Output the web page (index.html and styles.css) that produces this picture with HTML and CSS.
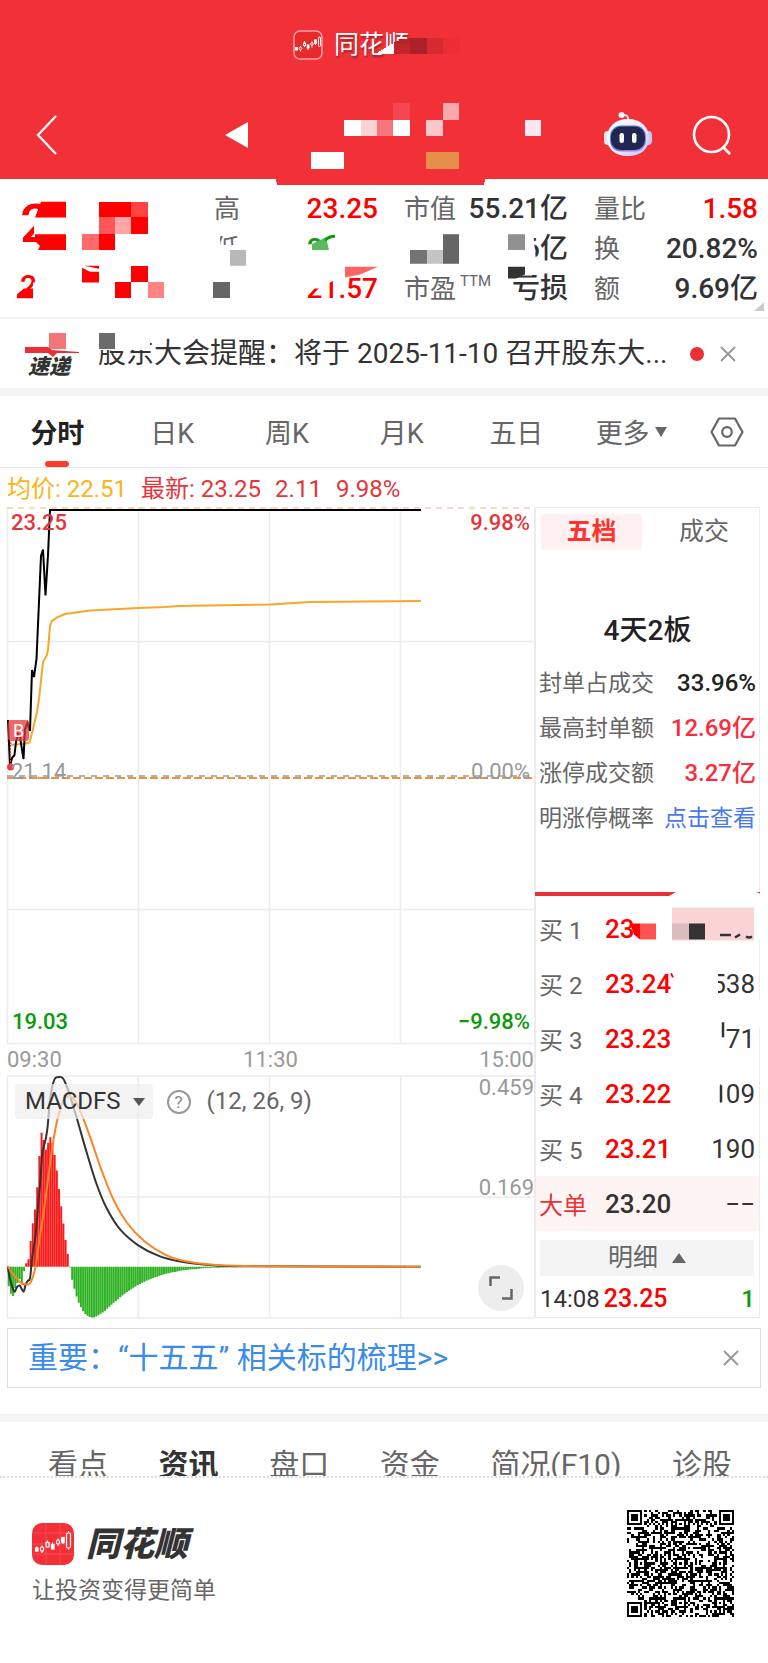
FILE: index.html
```html
<!DOCTYPE html>
<html lang="zh-CN">
<head>
<meta charset="utf-8">
<meta name="viewport" content="width=device-width, initial-scale=1">
<title>同花顺</title>
<link rel="stylesheet" href="styles.css">
</head>
<body>
<header class="top">
  <div class="brand">
    <svg class="brand-icon" viewBox="0 0 30 30" aria-hidden="true"><rect x="1" y="1" width="28" height="28" rx="6" fill="#e92a2c" stroke="#f9a0a2" stroke-width="1.5"/><g fill="#fff" stroke="#fff"><rect x="2.500" y="17.500" width="2" height="2.500"/><circle cx="7.500" cy="18.500" r="1.300" fill="none"/><path d="M7.500 16v1M7.500 20v1.500M11.500 11v6M15 14v6M19 11.500v6M22.500 9v6"/><rect x="10.500" y="13" width="2" height="2.500" fill="#e92a2c"/><rect x="14.200" y="15" width="1.800" height="3"/><circle cx="19" cy="14" r="1.200" fill="#e92a2c"/><rect x="21.700" y="10" width="1.600" height="3.500"/><rect x="25.500" y="7" width="2" height="9.500" rx="1" fill="none"/></g></svg>
    <span>同花顺</span>
  </div>
  <nav class="bar">
    <button class="icon-btn" aria-label="返回"><svg width="22" height="42" viewBox="0 0 22 42"><path d="M20 2 2 21 20 40" fill="none" stroke="#fff" stroke-width="2.200"/></svg></button>
    <button class="icon-btn prev" aria-label="上一只"><svg width="23" height="26" viewBox="0 0 23 26"><path d="M23 0V26L0 13Z" fill="#fff"/></svg></button>
    <span class="spacer"></span>
    <button class="icon-btn bot" aria-label="智能助手"><svg width="48" height="46" viewBox="0 0 48 46">
      <defs><linearGradient id="shell" x1="0" y1="0" x2="1" y2="1"><stop offset="0" stop-color="#fff"/><stop offset=".6" stop-color="#e7e9fb"/><stop offset="1" stop-color="#b9bff0"/></linearGradient><linearGradient id="rim" x1="0" y1="0" x2="1" y2="1"><stop offset="0" stop-color="#4a8fc0"/><stop offset=".5" stop-color="#7a6be0"/><stop offset="1" stop-color="#b58cf5"/></linearGradient></defs>
      <path d="M24 9c1-4-1-6-4-6" fill="none" stroke="#e9eafa" stroke-width="2"/><circle cx="17.500" cy="3" r="3" fill="#f4f2fc"/>
      <rect x="0" y="19" width="8" height="14" rx="4" fill="#e3e4f8"/><rect x="40" y="19" width="8" height="14" rx="4" fill="#c3c8f5"/>
      <path d="M24 7C37 7 45 15 45 26S37 44 24 44 3 37 3 26 11 7 24 7Z" fill="url(#shell)"/>
      <rect x="6" y="13.500" width="36" height="26" rx="11" fill="url(#rim)"/><rect x="7" y="14.500" width="34" height="23.500" rx="10" fill="#1f2750"/>
      <rect x="15.500" y="21" width="4.500" height="10" rx="2.200" fill="#fff"/><rect x="28" y="21" width="4.500" height="10" rx="2.200" fill="#fff"/></svg></button>
    <button class="icon-btn" aria-label="搜索"><svg width="40" height="40" viewBox="0 0 40 40"><g fill="none" stroke="#fff" stroke-width="2.600"><circle cx="19.500" cy="19.500" r="17.500"/><path d="M31 32 38 39"/></g></svg></button>
  </nav>
  <svg class="overlay" viewBox="0 0 768 185" preserveAspectRatio="none" aria-hidden="true" shape-rendering="crispEdges">
    <path d="M276 179H485L484 185H277Z" fill="#f23038"/>
    <path d="M377 53 393.500 43V54H377Z" fill="#fff"/><path d="M393.500 42 410 38V54H393.500Z" fill="#b92329"/><path d="M393.500 44h17v10h-17z" fill="#c0262c"/><path d="M410 38h17v16h-17z" fill="#ac2228"/><path d="M427 38h16v16h-16z" fill="#d52a31"/><path d="M443 38h17v16h-17z" fill="#eb2e36"/><path d="M385 54H410V60H385Z" fill="#f23038"/>
    <path d="M393 103h17v17h-17z" fill="#f54550"/><path d="M443 103h16v17h-16z" fill="#faa8ac"/>
    <path d="M344 120h17v16h-17zM393 120h17v16h-17zM311 152h33v17h-33z" fill="#fff"/><path d="M361 120h16v16h-16z" fill="#fcd3d5"/><path d="M377 120h16v16h-16z" fill="#f6767b"/><path d="M426 120h17v16h-17z" fill="#fbc7c9"/><path d="M525 120h16v16h-16z" fill="#f5e9ed"/><path d="M426 152h33v17h-33z" fill="#e58f4b"/>
  </svg>
</header>

<section class="quote">
  <div class="price"><strong>2</strong><span>2</span></div>
  <dl class="stats">
    <div><dt>高</dt><dd class="red">23.25</dd></div>
    <div><dt>低</dt><dd class="green low">21</dd></div>
    <div><dt></dt><dd class="red">21.57</dd></div>
  </dl>
  <dl class="stats">
    <div><dt>市值</dt><dd>55.21亿</dd></div>
    <div><dt></dt><dd>6亿</dd></div>
    <div><dt>市盈<sup>TTM</sup></dt><dd>亏损</dd></div>
  </dl>
  <dl class="stats">
    <div><dt>量比</dt><dd class="red">1.58</dd></div>
    <div><dt>换</dt><dd>20.82%</dd></div>
    <div><dt>额</dt><dd>9.69亿</dd></div>
  </dl>
  <svg class="overlay" viewBox="0 179 768 140" preserveAspectRatio="none" aria-hidden="true">
    <path d="M5 316H246V319H5Z" fill="#fff"/>
    <path d="M36 216H66V236H34V226H22V216Z" fill="#fff"/>
    <path d="M41 202H66V218H35ZM35 235H66V251H38L40 247 35 242Z" fill="red"/>
    <g shape-rendering="crispEdges"><path d="M99 202h32v16h-32zM131 218h17v17h-17zM99 235h16v16h-16zM131 267h17v17h-17zM115 284h16v16h-16z" fill="red"/><path d="M131 202h17v16h-17z" fill="#ff4343"/><path d="M99 218h16v17h-16z" fill="#ff5757"/><path d="M115 218h16v17h-16z" fill="#ffa5a5"/><path d="M82 235h17v16h-17z" fill="#ff6a6a"/><path d="M148 284h16v16h-16z" fill="#ff8383"/>
    <path d="M213 284h17v16h-17z" fill="#666"/></g>
    <path d="M33 284H42V302H33Z" fill="#fff"/>
    <path d="M82 269 90 273H99V284H82ZM33 290V300H17V296L24 290Z" fill="red"/><path d="M84 267H99V270Z" fill="red"/>
    <path d="M208 230H220V262H208ZM222 246H245V262H222ZM208 246H245V264H208Z" fill="#fff"/><path d="M230 251h16v16h-16z" fill="#b8b8b8"/>
    <path d="M302 247H340V266H302ZM320 236H340V266H320Z" fill="#fff"/><path d="M312 245 326 238 329 251H312Z" fill="#5cb95c"/><path d="M325 241Q329 237 335 237" fill="none" stroke="#0a9a0a" stroke-width="3"/>
    <path d="M302 272H334V282L318 290H302Z" fill="#fff"/><path d="M345 268H378L360 276 345 279Z" fill="#ff6464"/>
    <path d="M410 251h17v14h-17z" fill="#747474"/><path d="M427 251h16v14h-16z" fill="#c4c4c4"/><path d="M443 235h16v30h-16z" fill="#666"/>
    <path d="M519 232H530V266H519ZM530 232H533L536 262H530Z" fill="#fff"/><path d="M508 235h17v16h-17z" fill="#909090"/>
    <path d="M504 266H532V277H504Z" fill="#fff"/><path d="M508 268H525V276L516 280H508Z" fill="#333"/>
    <path d="M764 304V313H754Z" fill="#ccc"/>
  </svg>
</section>

<section class="news">
  <div class="news-logo"><b>速递</b></div>
  <a class="news-text" href="#">股东大会提醒：将于 2025-11-10 召开股东大...</a>
  <i class="dot"></i>
  <button class="icon-btn" aria-label="关闭"><svg width="16" height="16" viewBox="0 0 16 16"><path d="M1 1 15 15M15 1 1 15" stroke="#999" stroke-width="2"/></svg></button>
  <svg class="overlay" viewBox="0 319 768 69" preserveAspectRatio="none" aria-hidden="true">
    <path d="M96 330H150V350H96Z" fill="#fff"/><path d="M99 333h16v16h-16z" fill="#6b6b6b"/><path d="M49 333h17v16h-17z" fill="#f27579"/>
    <path d="M25 347H48L52 350 79 352V353H57L53 357 48 353H25Z" fill="#e83035"/>
  </svg>
</section>

<nav class="periods">
  <button class="on">分时</button><button>日K</button><button>周K</button><button>月K</button><button>五日</button>
  <button class="more">更多<svg width="12" height="10" viewBox="0 0 12 10"><path d="M0 0H12L6 10Z" fill="#666"/></svg></button>
  <button class="gear" aria-label="设置"><svg width="34" height="30" viewBox="0 0 34 30"><g fill="none" stroke="#666" stroke-width="2.200" stroke-linejoin="round"><path d="M9 1.500H25L32.500 15 25 28.500H9L1.500 15Z"/><circle cx="17" cy="15" r="4.800"/></g></svg></button>
</nav>

<p class="legend"><span class="avg">均价: 22.51</span><span>最新: 23.25</span><span>2.11</span><span>9.98%</span></p>

<main class="board">
  <div class="charts">
    <div class="chart price-chart">
      <svg class="plot" viewBox="7 507 527 537" preserveAspectRatio="none" aria-hidden="true">
        <path d="M7.500 507V1043.500H534M7 641.500H534M7 909.500H534M138.500 507V1043M269.500 507V1043M400.500 507V1043" fill="none" stroke="#ececec" stroke-width="1.500"/>
        <path d="M7 508H534" stroke="#ecd2ac" stroke-width="1.500" stroke-dasharray="6 5"/>
        <path d="M7 776H534" stroke="#999" stroke-width="1.500" stroke-dasharray="6 6"/>
        <path d="M7 778H534" stroke="#ef9141" stroke-width="2" stroke-dasharray="8 3"/>
        <path d="M8 740 12 745 20 744 29 743 30 741 33 729 37 712 39 699 43 662 47 655 48 650 50 626 52 621 58 617 65 614 90 610.500 138 608 165 607 178 606 270 604.500 310 602 421 601" fill="none" stroke="#f9a62b" stroke-width="2"/>
        <path d="M8 720 10 766 12 758 14.500 755 16 742 18 734 20 737 23.500 759 25 729 27.500 723 30 731 32 670 34 677 36.500 659 41 556 43 549.500 45.500 595.500 48 555 50 510H421" fill="none" stroke="#000" stroke-width="2"/>
        <path d="M10.500 742V766" stroke="#e74048" stroke-dasharray="2 1"/><circle cx="10.500" cy="767" r="3.500" fill="#e74048"/>
      </svg>
      <span class="tag tl red2">23.25</span><span class="tag tr red2">9.98%</span>
      <span class="tag ml">21.14</span><span class="tag mr">0.00%</span>
      <span class="tag bl green">19.03</span><span class="tag br green">−9.98%</span>
      <span class="buy">B</span>
    </div>
    <div class="times"><span>09:30</span><span>11:30</span><span>15:00</span></div>
    <div class="chart macd">
      <div class="macd-bar">
        <button class="macd-btn">MACDFS<svg width="12" height="8" viewBox="0 0 12 8"><path d="M0 0H12L6 8Z" fill="#555"/></svg></button>
        <button class="help" aria-label="说明">?</button>
        <span>(12, 26, 9)</span>
      </div>
      <svg class="plot" id="macd" viewBox="21 229 1530 726" preserveAspectRatio="none" aria-hidden="true">
        <path class="thin" d="M22 229H1551M22 592H1551M22 955H1551M22 229V955M402 229V955M783 229V955M1164 229V955" fill="none" stroke="#ececec" stroke-width="1.500"/>
      </svg>
      <span class="tag mt">0.459</span><span class="tag mm">0.169</span>
      <button class="expand" aria-label="放大"><svg width="24" height="24" viewBox="0 0 24 24"><path d="M1.500 10V1.500H11M22.500 13V22.500H13" fill="none" stroke="#666" stroke-width="2.500"/></svg></button>
    </div>
  </div>

  <aside class="side">
    <div class="side-tabs"><button class="on">五档</button><button>成交</button></div>
    <h2>4天2板</h2>
    <dl class="facts">
      <div><dt>封单占成交</dt><dd>33.96%</dd></div>
      <div><dt>最高封单额</dt><dd class="rose">12.69亿</dd></div>
      <div><dt>涨停成交额</dt><dd class="rose">3.27亿</dd></div>
      <div><dt>明涨停概率</dt><dd><a href="#">点击查看</a></dd></div>
    </dl>
    <table class="book">
      <tbody>
      <tr><th>买 1</th><td class="red">23</td><td></td></tr>
      <tr><th>买 2</th><td class="red">23.24</td><td>538</td></tr>
      <tr><th>买 3</th><td class="red">23.23</td><td>171</td></tr>
      <tr><th>买 4</th><td class="red">23.22</td><td>109</td></tr>
      <tr><th>买 5</th><td class="red">23.21</td><td>190</td></tr>
      <tr class="big"><th>大单</th><td>23.20</td><td>−−</td></tr>
      </tbody>
    </table>
    <button class="detail">明细<svg width="14" height="10" viewBox="0 0 14 10"><path d="M7 0 14 10H0Z" fill="#666"/></svg></button>
    <div class="tick"><span>14:08</span><span class="red">23.25</span><span class="green">1</span></div>
    <svg class="overlay" viewBox="536 508 223 810" preserveAspectRatio="none" aria-hidden="true">
      <path d="M757 895H761V940H757ZM757 1000H761V1028H757Z" fill="#fff"/>
      <path d="M535 892.500H676L669 896.500H535ZM756 892.500H760V894Z" fill="#e83035"/>
      <path d="M672 908H754V941H672Z" fill="#fad3d5"/><path d="M672 924h17v16h-17z" fill="#dcbcbe"/><path d="M689 924h16v16h-16z" fill="#333"/>
      <path d="M720 935.500H731M735 938 740 935M746 937Q749 939 752 937" fill="none" stroke="#333" stroke-width="2.500"/>
      <path d="M640 924h16v16h-16z" fill="#ff5353"/><path d="M630 924H640V940L634 935Z" fill="red"/>
      <path d="M710 970H718V1000H710ZM710 1026H726V1055H710ZM710 1080H720V1110H710Z" fill="#fff"/>
      <path d="M723 1023V1038M721 1086V1103" stroke="#333" stroke-width="2.500"/><path d="M671 974 673 978" stroke="red" stroke-width="2"/>
    </svg>
  </aside>
</main>

<div class="notice"><a href="#">重要：“十五五” 相关标的梳理&gt;&gt;</a><button class="icon-btn" aria-label="关闭"><svg width="16" height="16" viewBox="0 0 16 16"><path d="M1 1 15 15M15 1 1 15" stroke="#999" stroke-width="2"/></svg></button></div>

<nav class="sections"><button>看点</button><button class="on">资讯</button><button>盘口</button><button>资金</button><button>简况(F10)</button><button>诊股</button></nav>

<footer class="foot">
  <div>
    <div class="foot-brand">
      <svg width="42" height="42" viewBox="0 0 42 42" aria-hidden="true"><rect width="42" height="42" rx="10" fill="#f33038"/><path d="M0 10H42M0 21H42M0 31H42M14 0V42M28 0V42" stroke="#fff" stroke-opacity=".12"/><g fill="#fff" stroke="#fff" stroke-width="1.200"><rect x="3.500" y="25" width="2.500" height="3"/><rect x="8.500" y="24" width="3" height="4" rx="1" fill="none"/><path d="M4.700 23.500V25M10 22.500V24M10 28v2M15.500 17.500V19M20.500 19.500V21M26 15.500V17M26 21v2M31 19v2M36.500 8v2M36.500 25v1.500"/><rect x="14" y="19.500" width="3" height="4.500" fill="none"/><rect x="19.500" y="21.500" width="2.500" height="4.500"/><rect x="24.500" y="17" width="3" height="4" rx="1.500" fill="none"/><rect x="29.700" y="14.500" width="2.500" height="5"/><rect x="34.500" y="10" width="4" height="15" rx="1.500" fill="none"/></g></svg>
      <b>同花顺</b>
    </div>
    <p>让投资变得更简单</p>
  </div>
  <svg id="qr" class="qr" viewBox="0 0 49 49" shape-rendering="crispEdges" role="img" aria-label="二维码"></svg>
</footer>
<script src="charts.js"></script>
</body>
</html>
```
FILE: styles.css
```css
* { box-sizing: border-box; }
body { margin: 0; background: #fff; color: #333; font-family: Roboto, "Noto Sans CJK SC", sans-serif; }
button { border: 0; padding: 0; background: none; font: inherit; color: inherit; }
a { color: inherit; text-decoration: none; }
dl, dd, p, h2 { margin: 0; }
svg { display: block; flex: none; }
.red { color: #fe0000; }
.red2 { color: #e5353b; }
.green { color: #0a9a0a; }
.overlay { position: absolute; inset: 0; width: 100%; height: 100%; pointer-events: none; overflow: visible; }

.top { position: relative; height: 179px; background: #f23038; color: #fff; }
.top .overlay { height: 185px; z-index: 1; }
.brand { display: flex; justify-content: center; align-items: center; gap: 11px; padding: 28px 66px 0 0; font-size: 25px; line-height: 34px; text-shadow: 1px 2px 2px rgba(0, 0, 0, .35); }
.brand-icon { width: 30px; height: 30px; }
.bar { display: flex; align-items: center; padding: 50px 36px 0; }
.icon-btn { display: block; }
.prev { margin-left: 167px; }
.spacer { flex: 1; }
.bot { margin-right: 40px; }

.quote { position: relative; display: grid; grid-template-columns: 164px 164px 164px 164px; justify-content: end; column-gap: 26px; padding: 10px 10px 8px 0; border-bottom: 2px solid #f1f1f1; }
.price { display: flex; flex-direction: column; margin-left: -4px; padding-top: 9px; color: #fe0000; font-weight: 500; }
.price strong { font-size: 54px; line-height: 52px; font-weight: 500; }
.price span { padding-top: 16px; font-size: 30px; line-height: 40px; }
.stats div { display: flex; justify-content: space-between; height: 40px; line-height: 40px; }
.stats dt { color: #666; font-size: 26px; white-space: nowrap; }
.stats dd { font-size: 28px; font-weight: 500; white-space: nowrap; }
.stats .low { width: 71px; }
.stats sup { font-size: 15px; line-height: 1; vertical-align: 12px; margin-left: 4px; }

.news { position: relative; display: flex; align-items: center; height: 69px; padding: 0 32px 0 28px; }
.news-logo { width: 70px; padding-top: 26px; }
.news-logo b { font-size: 21px; line-height: 24px; font-style: italic; font-weight: 900; }
.news-text { font-size: 28px; line-height: 40px; white-space: nowrap; }
.dot { width: 14px; height: 14px; margin: 0 16px 0 auto; border-radius: 50%; background: #e83035; }

.periods { display: grid; grid-template-columns: repeat(6, 3fr) 2fr; justify-items: center; height: 80px; padding-right: 3px; border-top: 8px solid #f4f4f4; border-bottom: 1px solid #e8e8e8; color: #666; font-size: 27px; }
.periods button { position: relative; height: 71px; }
.periods .on { color: #222; font-weight: 700; }
.periods .on::after { content: ""; position: absolute; left: 15px; right: 15px; bottom: 0; height: 6px; border-radius: 3px; background: #ff3b30; }
.periods .more { display: flex; align-items: center; gap: 5px; }
.periods .gear { display: flex; align-items: center; }

.legend { display: flex; gap: 14px; padding: 4px 7px 1px; font-size: 24px; line-height: 34px; color: #e5353b; }
.legend .avg { color: #fbb41a; }

.board { display: flex; padding: 0 8px 0 7px; }
.charts { flex: 1; min-width: 0; }
.chart { position: relative; }
.price-chart { height: 537px; }
.plot { position: absolute; inset: 0; width: 100%; height: 100%; overflow: visible; }
.thin, .curve { vector-effect: non-scaling-stroke; }
.tag { position: absolute; font-size: 22px; line-height: 22px; color: #999; }
.tag.red2, .tag.green { font-weight: 500; }
.tag.red2 { color: #e5353b; }
.tag.green { color: #0a9a0a; }
.tl { left: 4px; top: 5px; }
.tr { right: 4px; top: 5px; }
.ml { left: 4px; top: 254px; }
.mr { right: 4px; top: 254px; }
.bl { left: 5px; bottom: 11px; }
.br { right: 4px; bottom: 11px; }
.mt { right: 0; top: 1px; }
.mm { right: 0; top: 101px; }
.buy { position: absolute; left: 1px; top: 213px; width: 21px; height: 21px; border-radius: 3px; background: rgba(229, 53, 59, .75); color: #fff; font-size: 18px; line-height: 22px; text-align: center; }
.times { display: flex; justify-content: space-between; height: 32px; font-size: 22px; line-height: 32px; color: #999; }
.macd { height: 242px; }
.macd-bar { position: relative; z-index: 1; display: flex; align-items: center; padding: 8px 0 0 8px; color: #666; font-size: 24px; line-height: 35px; }
.macd-btn { display: flex; align-items: center; gap: 12px; height: 35px; padding: 0 8px 0 10px; border-radius: 4px; background: rgba(238, 238, 238, .7); color: #333; }
.help { width: 24px; height: 24px; margin: 0 16px 0 14px; border: 2px solid #999; border-radius: 50%; color: #888; font-size: 17px; line-height: 20px; }
.expand { position: absolute; right: 10px; bottom: 7px; width: 46px; height: 46px; border-radius: 50%; background: #ededed; display: grid; place-items: center; }

.side { position: relative; width: 226px; border: solid #ececec; border-width: 1px 1px 1px 2px; }
.side-tabs { display: flex; gap: 12px; padding: 6px 5px 0; font-size: 25px; line-height: 36px; color: #666; }
.side-tabs button { flex: 1; }
.side-tabs .on { flex: 0 0 101px; border-radius: 4px; background: #fff1f1; color: #ff332e; font-weight: 700; }
.side h2 { padding-top: 63px; text-align: center; font-size: 28px; line-height: 36px; font-weight: 500; color: #222; }
.facts { padding: 12px 3px 0 3px; color: #222; }
.facts div { display: flex; justify-content: space-between; line-height: 45px; white-space: nowrap; }
.facts dt { font-size: 23px; color: #666; }
.facts dd { font-size: 24px; font-weight: 500; }
.facts .rose { color: #fb2c3c; }
.facts a { font-size: 23px; font-weight: 400; color: #4a78ee; }
.book { width: 100%; margin-top: 60px; border-collapse: collapse; table-layout: fixed; font-size: 26px; }
.book tr { height: 55px; }
.book th { width: 69px; padding: 0 0 0 3px; text-align: left; font-weight: 400; font-size: 24px; color: #666; }
.book td { padding: 0; font-weight: 500; }
.book td:last-child { padding-right: 4px; text-align: right; font-weight: 400; }
.book .big { background: #fff4f4; }
.book .big th { color: #e5353b; }
.detail { display: flex; align-items: center; justify-content: center; gap: 14px; width: calc(100% - 9px); height: 36px; margin: 9px 5px 0 4px; background: #f4f4f4; color: #666; font-size: 25px; line-height: 36px; }
.tick { display: flex; padding: 5px 4px 0 4px; font-size: 24px; line-height: 36px; }
.tick .red { padding-left: 4px; font-size: 25px; font-weight: 500; }
.tick .green { margin-left: auto; font-weight: 500; }

.notice { display: flex; justify-content: space-between; align-items: center; height: 60px; margin: 10px 7px 26px; padding: 0 21px 0 20px; border: 1px solid #ddd; font-size: 30px; line-height: 56px; color: #3b8bea; white-space: nowrap; }

.sections { display: flex; justify-content: space-between; align-items: flex-start; height: 64px; overflow: hidden; padding: 20px 36px 0 48px; border-top: 8px solid #f4f4f4; border-bottom: 2px dotted #ddd; color: #666; font-size: 30px; line-height: 46px; }
.sections .on { color: #333; font-weight: 700; }

.foot { display: flex; justify-content: space-between; align-items: flex-start; padding: 32px 34px 46px 32px; }
.foot-brand { display: flex; align-items: center; gap: 12px; padding-top: 13px; }
.foot-brand b { font-size: 34px; line-height: 42px; font-weight: 900; font-style: italic; }
.foot p { padding-top: 9px; color: #666; font-size: 23px; line-height: 34px; }
.qr { width: 107px; height: 107px; }
```
FILE: charts.js
```js
const NS = 'http://www.w3.org/2000/svg';
function path(parent, d, attrs) {
  const p = document.createElementNS(NS, 'path');
  p.setAttribute('d', d);
  for (const k in attrs) p.setAttribute(k, attrs[k]);
  parent.appendChild(p);
}
function smooth(pts) {
  let d = 'M' + pts[0];
  for (let i = 0; i < pts.length - 1; i++) {
    const a = pts[i - 1] || pts[i], b = pts[i], c = pts[i + 1], e = pts[i + 2] || c;
    d += `C${b[0] + (c[0] - a[0]) / 6} ${b[1] + (c[1] - a[1]) / 6} ${c[0] - (e[0] - b[0]) / 6} ${c[1] - (e[1] - b[1]) / 6} ${c[0]} ${c[1]}`;
  }
  return d;
}
const macd = document.getElementById('macd');
const zero = 801;
const hist = [[26,860],[32,882],[38,889],[45,865],[51,850],[57,838],[64,855],[70,815],[79,783],[85,777],[92,695],[98,657],[104,618],[111,533],[117,435],[123,385],[130,440],[136,455],[143,413],[149,413],[155,440],[162,482],[168,532],[174,585],[181,640],[187,690],[193,735],[200,778],[206,818],[212,850],[219,877],[225,898],[231,914],[238,928],[244,938],[250,945],[257,950],[263,953],[270,954],[276,953],[300,938],[330,910],[365,880],[402,855],[440,837],[480,823],[530,812],[600,805],[700,802]];
let up = '', down = '', k = 0;
for (let x = 26; x < 700; x += 6.35) {
  while (hist[k + 1][0] < x) k++;
  const [x0, y0] = hist[k], [x1, y1] = hist[k + 1];
  const y = (x - x0) / (x1 - x0) < 0.5 && x1 - x0 < 10 ? y0 : y0 + (y1 - y0) * (x - x0) / (x1 - x0);
  const bar = `M${x - 2.8} ${zero}V${y}h5.7V${zero}Z`;
  if (y < zero) up += bar; else down += bar;
}
path(macd, up, { fill: '#fb1a1a' });
path(macd, down, { fill: '#2fb324' });
const dif = [[23,800],[28,830],[35,858],[43,876],[50,862],[58,858],[69,876],[75,855],[82,843],[88,835],[94,775],[104,705],[112,610],[118,540],[123,465],[128,440],[134,415],[139,380],[145,310],[152,262],[160,237],[166,233],[180,233],[187,242],[200,275],[225,360],[250,450],[280,550],[310,625],[350,690],[402,737],[460,768],[520,785],[600,795],[720,800],[1222,801]];
const dea = [[23,800],[40,825],[60,848],[78,854],[90,848],[104,800],[115,720],[127,640],[140,540],[153,440],[165,370],[178,320],[188,297],[203,290],[220,305],[240,350],[265,420],[295,510],[330,600],[370,670],[420,725],[480,765],[540,785],[620,795],[760,800],[1222,801]];
path(macd, smooth(dif), { class: 'curve', fill: 'none', stroke: '#333', 'stroke-width': 2 });
path(macd, smooth(dea), { class: 'curve', fill: 'none', stroke: '#fb8424', 'stroke-width': 2 });

const qr = document.getElementById('qr'), N = 49;
let seed = 20251110, cells = '';
const rnd = () => (seed = (seed * 1103515245 + 12345) % 2147483648) / 2147483648;
const ring = (x, y, cx, cy, dark) => dark.includes(Math.max(Math.abs(x - cx), Math.abs(y - cy)));
for (let y = 0; y < N; y++) for (let x = 0; x < N; x++) {
  let on = rnd() < 0.5;
  if (y === 6) on = x % 2 === 0;
  if (x === 6) on = y % 2 === 0;
  for (const [cx, cy] of [[24,6],[6,24],[24,24],[42,24],[24,42],[42,42]])
    if (Math.abs(x - cx) < 3 && Math.abs(y - cy) < 3) on = ring(x, y, cx, cy, [0, 2]);
  for (const [cx, cy] of [[3,3],[45,3],[3,45]])
    if (Math.abs(x - cx) < 5 && Math.abs(y - cy) < 5) on = ring(x, y, cx, cy, [0, 1, 3]);
  if (on) cells += `M${x} ${y}h1v1h-1z`;
}
path(qr, cells, { fill: '#000' });
```
